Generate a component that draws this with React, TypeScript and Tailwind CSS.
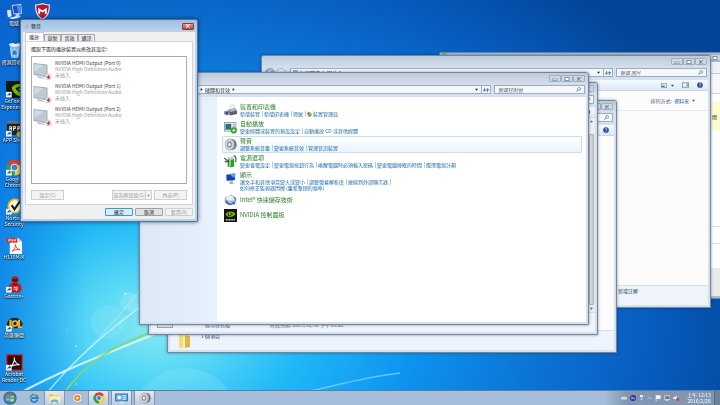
import { ReactNode } from "react";
import clsx from "clsx";

/* ---------- desktop and taskbar icons ---------- */

const ComputerIcon = () => (
  <svg viewBox="0 0 18 18" className="size-full">
    <path d="M6 2l10-1 1 10-9 1z" fill="#dfe9f4" />
    <path d="M7 3l8.400-.8.7 8L8.500 11z" fill="#1d49c9" />
    <path d="M11 2.600l4.400-.4.700 8-2.800.3z" fill="#4b86ef" />
    <path d="M10 12l4-.4.500 2.400 2 .8-6 .8-2-.8 1.800-.8z" fill="#c8d4e2" />
    <path d="M1 8l4-1 1 7-4 1z" fill="#dde6f0" />
    <path d="M3 15.500l8-1.200 3 1.200-8 1.500z" fill="#eef3f8" />
  </svg>
);

const McAfeeIcon = () => (
  <svg viewBox="0 0 18 18" className="size-full">
    <path d="M1 1.500C4 1 7 1 9 0c2 1 5 1 8 1.500 0 8-2 13-8 16.500C3 14.500 1 9.500 1 1.500z" fill="#d8dce2" />
    <path d="M2.400 2.700C5 2.400 7.500 2 9 1.400c1.500.6 4 1 6.600 1.300C15.500 9.500 14 13.500 9 16.500 4 13.500 2.500 9.500 2.400 2.700z" fill="#b3182c" />
    <path d="M4.500 11V5l4.500 3 4.500-3v6l-2 1V8.500L9 10 6.500 8.500V12z" fill="#fff" />
  </svg>
);

const RecycleIcon = () => (
  <svg viewBox="0 0 18 18" className="size-full">
    <path d="M4 4h11l-1.500 12.500c-3 1-5.500 1-8 0z" fill="#8fc3ee" opacity=".9" />
    <path d="M3 2l4-1 3 1 4-1 2 3c-4 1.500-9 1.500-12 0z" fill="#e9f3fb" />
    <path d="M5 6l1 9M9 6.500V16M13 6l-1 9" stroke="#d5eafa" strokeWidth=".8" />
    <path d="M7 12l2-3 2 3zM8 13h3" fill="#2775c9" stroke="#2775c9" />
  </svg>
);

const ShortcutMark = () => (
  <>
    <rect x="0" y="11.500" width="6" height="6" fill="#f4f8fc" />
    <path d="M1.500 16.500c0-2 .5-3 2-3.300V12l2 2-2 2v-1.200c-1 .1-1.500.7-2 1.700z" fill="#1560bd" />
  </>
);

const NvidiaEye = ({ shortcut = false }: { shortcut?: boolean }) => (
  <svg viewBox="0 0 18 18" className="size-full">
    <rect width="18" height="18" fill="#141614" />
    {shortcut ? (
      <>
        <path d="M6 7C8 4 12 2.500 18 3v13h-4C9 14 7 11 6 7z" fill="#76b900" />
        <path d="M10 8c2-2 5-2.500 8-1v5c-4 0-6-1-8-4z" fill="#141614" />
        <path d="M13 8.500c1.500-1 3.500-1 5 0v2c-2 0-4-.5-5-2z" fill="#8ed11c" />
        <ShortcutMark />
      </>
    ) : (
      <>
        <path d="M2 7C5 3 12 2 16 7c-2.500 4-8 5-11 3.500C4 10 3 8.500 2 7z" fill="#76b900" />
        <path d="M5 7c2-2.500 5-2.500 7 0-2 2.500-4 3-6 2z" fill="#141614" />
        <path d="M7 6c2-.3 3 .5 3.500 1.200C9.500 8 8.500 8.500 7 8.300z" fill="#9bdc28" />
        <path d="M2.500 15h13" stroke="#c9cdc4" strokeWidth="2" strokeDasharray="1.600 .6" />
      </>
    )}
  </svg>
);

const AppShopIcon = () => (
  <svg viewBox="0 0 18 18" className="size-full">
    <rect x="1" y="1" width="17" height="15" rx="2" fill="#202327" />
    <path d="M1 3c0-2 1-2 2-2h13c2 0 2 1 2 2v1H1z" fill="#6b7078" />
    <path d="M4 11V7h1.800v4M4 9h1.800M8 11.500V7h2v2H8M12.500 11.500V7h2v2h-2" stroke="#f1f1f1" fill="none" />
    <circle cx="14" cy="15" r="2.800" fill="#d9a62d" />
    <ShortcutMark />
  </svg>
);

const ChromeIcon = ({ shortcut = false }: { shortcut?: boolean }) => (
  <svg viewBox="0 0 18 18" className="size-full">
    <path d="M9 9L1.600 4.700A8.500 8.500 0 0 1 16.500 5z" fill="#dd3f31" />
    <path d="M9 9l7.500-4A8.500 8.500 0 0 1 9 17.500z" fill="#fbcd2f" />
    <path d="M9 9v8.500A8.500 8.500 0 0 1 1.600 4.700z" fill="#2fa04e" />
    <circle cx="9" cy="9" r="4" fill="#fff" />
    <circle cx="9" cy="9" r="3.100" fill="#3f7ee8" />
    {shortcut && <ShortcutMark />}
  </svg>
);

const NortonIcon = () => (
  <svg viewBox="0 0 18 18" className="size-full">
    <circle cx="9.500" cy="8.500" r="8" fill="#f2b91d" />
    <circle cx="9.500" cy="8.500" r="6" fill="#fdfbf2" />
    <path d="M6 7.500l3 4.500 6-9" stroke="#1b1b1b" strokeWidth="2.200" fill="none" />
    <ShortcutMark />
  </svg>
);

const PdfIcon = () => (
  <svg viewBox="0 0 18 18" className="size-full">
    <path d="M4 1h9l4 4v13H4z" fill="#fbfbfb" />
    <path d="M13 1l4 4h-4z" fill="#cfcfcf" />
    <rect x="1" y="1" width="11" height="5" fill="#cf2a20" />
    <path d="M3 5V2.300h1.500v1.500H3M6.200 2.300v2.400c2 0 2-2.400 0-2.400zM9.300 5V2.300H11M9.300 3.700h1.300" stroke="#fff" strokeWidth=".7" fill="none" />
    <path d="M6.500 15c2-1.500 4-5 3.500-7 0 3 2 5 5 5.500-3-.5-6 0-8.500 1.500z" fill="none" stroke="#d8372c" strokeWidth=".9" />
  </svg>
);

const GarenaIcon = () => (
  <svg viewBox="0 0 18 18" className="size-full">
    <circle cx="9.500" cy="4" r="3.700" fill="#b51a1c" />
    <path d="M6.500 3.500h6l-.5 2H7z" fill="#3a1210" />
    <path d="M4 9c3-2 8-2 11 0 2 3 2 7-1 8.500H5C2 16 2 12 4 9z" fill="#c41d20" />
    <path d="M7 8h5v2H7z" fill="#7c0f12" />
    <path d="M8 12h4l-1 4M8 14h4" stroke="#f6d9d2" fill="none" />
    <ShortcutMark />
  </svg>
);

const LeagueIcon = () => (
  <svg viewBox="0 0 18 18" className="size-full">
    <path d="M1 9c1-4 4-6 8-6s7 2 8.500 6l-1 5H2z" fill="#22211d" />
    <path d="M3.500 5h2.500v7h2v2H3.500zM12.500 5H15v7h2v2h-4.500z" fill="#e3b233" />
    <circle cx="9.500" cy="9" r="2.600" fill="none" stroke="#edc54d" strokeWidth="1.500" />
    <ShortcutMark />
  </svg>
);

const AcrobatIcon = () => (
  <svg viewBox="0 0 18 18" className="size-full">
    <rect x=".8" y=".8" width="16.400" height="16.400" fill="#2b0b0b" stroke="#d32b25" strokeWidth="1.400" />
    <path d="M4.500 13.500C7 12 9.500 7 8.800 3.500 8.500 7.500 11 11 14.500 11.500c-3.500-.8-7 .3-10 2z" fill="none" stroke="#f3eaea" strokeWidth="1.100" />
    <ShortcutMark />
  </svg>
);

const StartOrb = () => (
  <svg viewBox="0 0 18 18" className="size-full">
    <circle cx="9" cy="9" r="8.500" fill="#2b608f" />
    <circle cx="9" cy="9" r="7.500" fill="#3d86b8" />
    <path d="M4 5.500c1.500-1 3-1 4.500 0v3.200c-1.500-.8-3-.8-4.500 0z" fill="#ee6a35" />
    <path d="M9.500 5.800c1.500.8 3 .8 4.500-.2v3.200c-1.500 1-3 1-4.500.2z" fill="#9acb3c" />
    <path d="M4 9.700c1.500-1 3-1 4.500 0v3.200c-1.500-.8-3-.8-4.500 0z" fill="#69c3f2" />
    <path d="M9.500 10c1.500.8 3 .8 4.500-.2V13c-1.500 1-3 1-4.500.2z" fill="#fbd03b" />
  </svg>
);

const IeIcon = () => (
  <svg viewBox="0 0 18 18" className="size-full">
    <path d="M14.500 11.500A5.500 5.500 0 1 1 14.800 9H5" fill="none" stroke="#2583d3" strokeWidth="2.800" />
    <path d="M2 15.500C0 12 9 2 16 2.500c1.500.5 1 2 0 3.500" fill="none" stroke="#f0c23a" strokeWidth="1.500" />
  </svg>
);

const ExplorerIcon = () => (
  <svg viewBox="0 0 18 18" className="size-full">
    <path d="M1 3h6l1 1.500h8V15H1z" fill="#f0d577" />
    <path d="M2 6h15v9H2z" fill="#fbeeb0" />
    <path d="M4 12c2-2 8-2 10 0v4h-2v-2H6v2H4z" fill="#69b2e2" />
    <path d="M4 4h2v1H4z" fill="#54a344" />
  </svg>
);

const MediaIcon = () => (
  <svg viewBox="0 0 18 18" className="size-full">
    <rect x="8" y="2" width="8" height="13" fill="#cfe2f2" stroke="#80a6c8" />
    <circle cx="8" cy="9" r="7" fill="#f6f1ea" />
    <circle cx="8" cy="9" r="5.500" fill="#e57a1e" />
    <path d="M6.300 5.800v6.400L11.300 9z" fill="#fff" />
  </svg>
);

const PanelIcon = () => (
  <svg viewBox="0 0 18 18" className="size-full">
    <rect x="0" y="2" width="18" height="11" fill="#2e7fc0" />
    <rect x="1.500" y="3.500" width="15" height="8" fill="#6bb6e6" />
    <circle cx="6" cy="7.500" r="2.500" fill="#eaf5fb" />
    <path d="M11 5h4M11 7.500h4M11 10h4" stroke="#fff" />
    <path d="M7 13h5l1 3H6z" fill="#d7dee6" />
  </svg>
);

const SpeakerIcon = () => (
  <svg viewBox="0 0 18 18" className="size-full">
    <ellipse cx="11.500" cy="9" rx="6" ry="7.500" fill="#6f747b" />
    <ellipse cx="8" cy="9" rx="7" ry="8.300" fill="#a9aeb5" />
    <ellipse cx="7.500" cy="9" rx="5.600" ry="6.900" fill="#d6d9dd" />
    <ellipse cx="7.500" cy="9" rx="3.600" ry="4.600" fill="#9399a1" />
    <ellipse cx="7.500" cy="9" rx="1.700" ry="2.200" fill="#eef0f2" />
  </svg>
);

/* ---------- control panel icons ---------- */

const PrinterIcon = () => (
  <svg viewBox="0 0 18 18" className="size-full">
    <path d="M8 2l6-1 1 6-6 1z" fill="#f3f6f9" stroke="#a8b1bb" strokeWidth=".5" />
    <path d="M6 8l9-2 3 3v5l-9 2-3-3z" fill="#59626d" />
    <path d="M6 8l9-2 3 3-9 2z" fill="#a9b2bc" />
    <path d="M0 10l5-1 3 3v3l-5 1-3-2z" fill="#8b96a3" />
    <circle cx="4" cy="12.500" r="1.800" fill="#32475e" />
  </svg>
);

const AutoPlayIcon = () => (
  <svg viewBox="0 0 18 18" className="size-full">
    <rect x=".5" y="2" width="16" height="12" fill="#e9f0f5" stroke="#7b8b99" />
    <rect x="2" y="4" width="8" height="8" fill="#2d6f77" />
    <path d="M12 5h3M12 8h3" stroke="#6a7c8c" />
    <circle cx="13.500" cy="13" r="4.300" fill="#37a52c" />
    <path d="M11.500 13h4M13.500 11v4" stroke="#fff" strokeWidth="1.300" />
  </svg>
);

const PowerIcon = () => (
  <svg viewBox="0 0 18 18" className="size-full">
    <path d="M5 5h9v11c-3 1.500-6 1.500-9 0z" fill="#2f9a33" />
    <path d="M7 6h2.500v10H7z" fill="#8cdf7c" />
    <ellipse cx="9.500" cy="4.500" rx="4.500" ry="2" fill="#c9d0d0" />
    <path d="M0 4l5 4M1 8c3 3 5 1 6 0M13 1c4 0 4 4 3 9" stroke="#333b3d" strokeWidth="1.400" fill="none" />
  </svg>
);

const DisplayIcon = () => (
  <svg viewBox="0 0 18 18" className="size-full">
    <path d="M2 3l14-2v11L3 13z" fill="#c8d5e4" />
    <path d="M3.200 4L15 2.200v8.800l-11 1z" fill="#173fae" />
    <path d="M9 3.200l6-1v5C12 8 10 6 9 3.200z" fill="#56a6f0" />
    <path d="M8 13l4-.5.500 2.500 2 1-8 1 1.500-1.500z" fill="#9cacbf" />
  </svg>
);

const StorageIcon = () => (
  <svg viewBox="0 0 18 18" className="size-full">
    <path d="M1 5l9-4 7 4v6l-9 5-7-4z" fill="#a7b6c6" />
    <ellipse cx="9" cy="6" rx="6" ry="3.500" fill="#e8eef4" />
    <path d="M2 9c0 5 6 8 11 5l1 2 2-5-5 0 1 1.500c-3 2-7 0-8-3.500z" fill="#2f73bf" />
    <path d="M16 9c0-2-1-4-3-5" stroke="#2f73bf" strokeWidth="1.500" fill="none" />
  </svg>
);

const ShieldIcon = () => (
  <svg viewBox="0 0 10 10" className="mr-px size-[5px]">
    <path d="M5 0l4.500 1.500C9.500 6 8 8.500 5 10z" fill="#f1c232" />
    <path d="M5 0L.5 1.500C.5 6 2 8.500 5 10z" fill="#3474c4" />
    <path d="M.8 5H5v5C2.500 9 1.200 7 .8 5z" fill="#e3b52b" />
    <path d="M9.200 5H5v5c2.500-1 3.800-3 4.200-5z" fill="#3f8f3f" />
  </svg>
);

const MonitorIcon = () => (
  <svg viewBox="0 0 20 20" className="h-5 w-[21px] shrink-0">
    <path d="M1 3l14 1.500v13L1 15z" fill="#a3aeba" />
    <path d="M2 4.200l12 1.400v10.500L2 14z" fill="#bfc9d3" />
    <path d="M2 4.200l9 1L2 12z" fill="#d3dbe3" />
    <path d="M5 16l6 1.500 2 1.500-8-1z" fill="#bcc5ce" />
    <circle cx="16" cy="17" r="2.900" fill="#f5eded" stroke="#b0b0b0" strokeWidth=".5" />
    <path d="M16 15v2.600M14.500 16.800L16 18.800l1.500-2z" fill="#b83c3c" stroke="#b83c3c" strokeWidth=".8" />
  </svg>
);

const SearchGlyph = () => (
  <svg viewBox="0 0 8 8" className="size-[5px] shrink-0">
    <circle cx="5" cy="3" r="2.300" fill="#e7f2fb" stroke="#4579ad" />
    <path d="M3.200 4.800L.6 7.400" stroke="#4579ad" strokeWidth="1.400" />
  </svg>
);

const DownArrow = () => (
  <svg viewBox="0 0 4 4" className="size-[3px] shrink-0">
    <path d="M0 1h4L2 3.500z" fill="currentColor" />
  </svg>
);

const RightArrow = () => (
  <svg viewBox="0 0 4 4" className="size-[3px] shrink-0">
    <path d="M1 0v4l2.500-2z" fill="#222" />
  </svg>
);

const HelpIcon = () => (
  <svg viewBox="0 0 8 8" className="size-[6px]">
    <circle cx="4" cy="4" r="3.800" fill="#30489a" />
    <path d="M2.800 3c0-1.700 2.500-1.600 2.400 0C5.200 4 4 3.900 4 5M4 5.800v.8" stroke="#fff" strokeWidth=".8" fill="none" />
  </svg>
);

/* ---------- windows ---------- */

function WindowControls() {
  const button =
    "flex h-[7px] w-3 items-center justify-center rounded-[1px] border border-[#a0afc0] bg-[#ccd8e5] text-[#6f7c8a]";
  return (
    <div className="flex">
      <button aria-label="最小化" className={button}>
        <svg viewBox="0 0 6 4" className="h-1 w-[6px]">
          <rect x=".5" y="2" width="5" height="1.500" fill="#fff" stroke="currentColor" strokeWidth=".6" />
        </svg>
      </button>
      <button aria-label="最大化" className={button}>
        <svg viewBox="0 0 6 4" className="h-1 w-[6px]">
          <rect x="1" y=".5" width="4" height="3" fill="#fff" stroke="currentColor" strokeWidth=".8" />
        </svg>
      </button>
      <button aria-label="關閉" className={button}>
        <svg viewBox="0 0 6 4" className="h-1 w-[6px]">
          <path d="M1.300.4l3.400 3.200M4.700.4L1.300 3.600" stroke="currentColor" strokeWidth="1.100" />
        </svg>
      </button>
    </div>
  );
}

type ExplorerProps = {
  className: string;
  path: string[];
  search: string;
  children: ReactNode;
};

function ExplorerWindow({ className, path, search, children }: ExplorerProps) {
  return (
    <section
      className={clsx(
        "absolute flex h-[253px] w-[450px] flex-col rounded-t-[3px] border border-[#74879a] bg-[#d5e1ee] px-[2px] pb-[2px] shadow-[0_0_3px_rgba(0,20,50,0.45)]",
        className,
      )}
    >
      <header className="-mx-[2px] flex h-3 shrink-0 items-start justify-end rounded-t-[2px] bg-linear-to-b from-[#bccbda] to-[#d5e0eb] px-[3px] pt-[2px]">
        <WindowControls />
      </header>
      <div className="flex h-3 shrink-0 items-start gap-[3px] px-px">
        <div className="flex w-[22px] items-center gap-px">
          <button
            aria-label="上一頁"
            className="flex size-[10px] items-center justify-center rounded-full border border-[#7f93b5] bg-linear-to-b from-[#b8c9e6] to-[#3963a8] text-white"
          >
            <svg viewBox="0 0 8 8" className="size-[6px]">
              <path d="M7 4H2M4 1.500L1.500 4 4 6.500" stroke="currentColor" strokeWidth="1.500" fill="none" />
            </svg>
          </button>
          <button
            aria-label="下一頁"
            className="size-[10px] rounded-full border border-[#9fb0c4] bg-linear-to-b from-[#e9eff6] to-[#bccbdd]"
          />
        </div>
        <div className="flex h-[9px] flex-1 items-center border border-[#9dadbf] bg-[#f4f8fc]">
          <nav className="flex flex-1 items-center gap-[2px] px-[2px] text-[#333]">
            <span className="size-[5px] bg-[#8db9d4]" />
            <RightArrow />
            {path.map((part) => (
              <span key={part} className="flex items-center gap-[2px]">
                <button>{part}</button>
                <RightArrow />
              </span>
            ))}
          </nav>
          <button aria-label="先前的位置" className="px-[3px] text-[#222]">
            <DownArrow />
          </button>
          <button
            aria-label="重新整理"
            className="flex h-full w-[9px] items-center justify-center border-l border-[#9dadbf]"
          >
            <svg viewBox="0 0 8 8" className="size-[6px]">
              <path d="M.5 4h3M2 1v4M.5 4L2 6l1.500-2M4.500 4H8M6 7V3M4.500 4L6 2l1.500 2" stroke="#2b76b5" fill="none" />
            </svg>
          </button>
        </div>
        <label className="flex h-[9px] w-[91px] items-center border border-[#9dadbf] bg-[#f4f8fc] px-[3px]">
          <input
            aria-label={search}
            placeholder={search}
            className="min-w-0 flex-1 bg-transparent italic outline-none placeholder:text-[#666]"
          />
          <SearchGlyph />
        </label>
      </div>
      <div className="flex min-h-0 flex-1 flex-col">{children}</div>
    </section>
  );
}

function Toolbar({ views = false }: { views?: boolean }) {
  return (
    <div className="flex h-[11px] shrink-0 items-center justify-end gap-2 border-b border-[#cbd8e6] bg-linear-to-b from-[#f6fafe] to-[#dde8f5] px-[5px] text-[#26476f]">
      {views && (
        <>
          <button aria-label="變更檢視" className="flex items-center gap-1">
            <svg viewBox="0 0 8 6" className="h-[5px] w-[6px]">
              <rect x=".5" y=".5" width="7" height="5" fill="#e6f3fb" stroke="#6e9abb" />
              <rect x="1" y="3" width="4" height="2" fill="#4b9a55" />
            </svg>
            <DownArrow />
          </button>
          <button aria-label="預覽窗格">
            <svg viewBox="0 0 8 6" className="h-[6px] w-[7px]">
              <rect x=".5" y=".5" width="7" height="5" fill="#fff" stroke="#6e8eab" />
              <rect x="5" y="1" width="2" height="4" fill="#7fb7df" />
            </svg>
          </button>
        </>
      )}
      <button aria-label="說明">
        <HelpIcon />
      </button>
    </div>
  );
}

const categories = [
  {
    title: "裝置和印表機",
    icon: <PrinterIcon />,
    links: ["新增裝置", "新增印表機", "滑鼠", "裝置管理員"],
  },
  {
    title: "自動播放",
    icon: <AutoPlayIcon />,
    links: ["變更媒體或裝置的預設設定", "自動播放 CD 或其他媒體"],
  },
  {
    title: "聲音",
    icon: <SpeakerIcon />,
    links: ["調整系統音量", "變更系統音效", "管理音訊裝置"],
    active: true,
  },
  {
    title: "電源選項",
    icon: <PowerIcon />,
    links: [
      "變更省電設定",
      "變更電源按鈕行為",
      "喚醒電腦時必須輸入密碼",
      "變更電腦睡眠的時間",
      "選擇電源計劃",
    ],
  },
  {
    title: "顯示",
    icon: <DisplayIcon />,
    links: ["讓文字和其他項目變大或變小", "調整螢幕解析度", "連線到外部顯示器"],
    more: "如何修正監視器閃爍 (重新整理的頻率)",
  },
  { title: "Intel® 快速儲存技術", icon: <StorageIcon /> },
  { title: "NVIDIA 控制面板", icon: <NvidiaEye /> },
];

function ControlPanel() {
  return (
    <div className="flex flex-1 bg-white">
      <aside className="w-[75px] bg-linear-to-r from-[#dde8f6] to-[#e8f1fd]" />
      <ul className="flex-1 pt-[5px] pr-1 pl-[5px] text-[#1f6aa8]">
        {categories.map((item) => (
          <li
            key={item.title}
            className={clsx(
              "flex gap-[3px] rounded-[1px] border pl-px",
              item.active
                ? "border-[#c9dff0] bg-linear-to-b from-white to-[#eaf3fc]"
                : "border-transparent",
            )}
          >
            <span className={clsx("size-[13px] shrink-0", item.links && "mt-px")}>
              {item.icon}
            </span>
            <div className={item.links ? "pb-px" : "py-[2px]"}>
              <h2 className="text-[6px] leading-[8px] text-[#2a7d2a]">
                <a href="#">{item.title}</a>
              </h2>
              {item.links && (
                <ul className="flex leading-[6px] whitespace-nowrap">
                  {item.links.map((link) => (
                    <li
                      key={link}
                      className={clsx(
                        "mr-px flex items-center border-r border-[#c8c8c8] pr-[2px]",
                        !item.more && "last:border-0",
                      )}
                    >
                      {link === "裝置管理員" && <ShieldIcon />}
                      <a href="#">{link}</a>
                    </li>
                  ))}
                </ul>
              )}
              {item.more && (
                <p className="leading-[6px]">
                  <a href="#">{item.more}</a>
                </p>
              )}
            </div>
          </li>
        ))}
      </ul>
    </div>
  );
}

const devices = [0, 1, 2];
const soundTabs = ["播放", "錄製", "音效", "通訊"];

function SoundDialog() {
  const grayButton =
    "flex h-[10px] items-center justify-center border border-[#cfcfcf] bg-[#f4f4f4] text-[#9a9a9a]";
  const footButton =
    "flex h-2 w-7 items-center justify-center rounded-[1px] border";
  return (
    <section
      role="dialog"
      aria-label="聲音"
      className="absolute top-[19px] left-[20px] flex w-[178px] flex-col rounded-t-[3px] border border-[#4d7396] bg-[#b9d3ec] px-[2px] pb-[2px] shadow-[0_0_4px_rgba(0,10,40,0.6)]"
    >
      <header className="-mx-[2px] flex h-3 items-center gap-[3px] rounded-t-[2px] bg-linear-to-b from-[#a3bfdf] to-[#bcd3ea] pr-[3px] pl-[2px]">
        <span className="size-[5px] opacity-60">
          <SpeakerIcon />
        </span>
        <h1 className="flex-1 text-[#1c2733]">聲音</h1>
        <button
          aria-label="關閉"
          className="flex h-[7px] w-3 items-center justify-center rounded-[1px] border border-[#8c3b34] bg-linear-to-b from-[#dd9c90] to-[#bb4434]"
        >
          <svg viewBox="0 0 6 4" className="h-1 w-[6px]">
            <path d="M1.300.4l3.400 3.200M4.700.4L1.300 3.600" stroke="#fff" strokeWidth="1.100" />
          </svg>
        </button>
      </header>
      <div className="bg-[#f0f0f0] px-[2px] pb-[3px]">
        <div role="tablist" className="flex h-[9px] items-end text-[#222]">
          {soundTabs.map((tab, i) => (
            <button
              key={tab}
              role="tab"
              aria-selected={i === 0}
              className={clsx(
                "flex items-center border border-b-0",
                i === 0
                  ? "h-[9px] w-[19px] border-[#c4c8cc] bg-white pl-[3px]"
                  : "h-[7px] w-[17px] justify-center border-[#a5a9ad] bg-[#ececec]",
              )}
            >
              {tab}
            </button>
          ))}
        </div>
        <div className="border border-[#d0d4d8] bg-white px-[5px] pt-[3px] pb-1">
          <p className="mb-[3px] leading-[8px] text-[#222]">
            選取下面的播放裝置以修改其設定:
          </p>
          <ul className="h-32 border border-[#a6acb4] pt-[3px]">
            {devices.map((port) => (
              <li key={port} className="flex h-[23px] gap-[2px] leading-[6px] text-[#9b9b9b]">
                <MonitorIcon />
                <div>
                  <p className="text-[#444]">NVIDIA HDMI Output (Port {port})</p>
                  <p>NVIDIA High Definition Audio</p>
                  <p>未插入</p>
                </div>
              </li>
            ))}
          </ul>
          <div className="mt-[6px] flex">
            <button disabled className={clsx(grayButton, "mr-auto w-[33px]")}>
              設定(C)
            </button>
            <button disabled className={clsx(grayButton, "w-[34px]")}>
              設為預設值(S)
            </button>
            <button disabled aria-label="更多" className={clsx(grayButton, "mr-[2px] w-[6px] border-l-0")}>
              <DownArrow />
            </button>
            <button disabled className={clsx(grayButton, "w-[33px]")}>
              內容(P)
            </button>
          </div>
        </div>
        <div className="mt-[3px] flex justify-end gap-[2px]">
          <button className={clsx(footButton, "border-[#3c9ac4] bg-[#d4eef8] text-[#111]")}>
            確定
          </button>
          <button className={clsx(footButton, "border-[#a0a0a0] bg-[#e2e2e2] text-[#111]")}>
            取消
          </button>
          <button disabled className={clsx(footButton, "border-[#cfcfcf] bg-[#f4f4f4] text-[#9a9a9a]")}>
            套用(A)
          </button>
        </div>
      </div>
    </section>
  );
}

function BrowserWindow() {
  return (
    <section className="absolute top-[52px] left-[439px] flex h-[247px] w-[296px] flex-col rounded-t-[2px] border border-[#71869e] bg-[#a5bcda] pb-[2px]">
      <header className="flex h-[9px] items-center justify-between pr-px pl-[2px]">
        <span className="h-full w-[5px] bg-[#6fba83]" />
        <WindowControls />
      </header>
      <div className="h-3 border-b border-[#c2c8cf] bg-[#eef2f6]" />
      <div className="h-5 border-b border-[#d2d2d2] bg-[#f7f7f7]" />
      <div className="h-2 bg-white" />
      <div className="flex h-[29px] items-center bg-[#fdfccf] pl-[272px] text-[#333]">
        開
      </div>
      <div className="h-24 border-b border-[#e2e2e2] bg-white" />
      <div className="h-[17px] border-b border-[#e2e2e2] bg-white" />
      <div className="h-6 bg-white" />
      <div className="flex-1 bg-[#ebebeb]" />
    </section>
  );
}

/* ---------- desktop ---------- */

type Shortcut = { name: string; icon: ReactNode; hideName?: boolean };

const shortcuts: Shortcut[] = [
  { name: "電腦", icon: <ComputerIcon /> },
  { name: "資源回收筒", icon: <RecycleIcon /> },
  { name: "GeForce Experience", icon: <NvidiaEye shortcut /> },
  { name: "APP Shop", icon: <AppShopIcon /> },
  { name: "Google Chrome", icon: <ChromeIcon shortcut /> },
  { name: "Norton Security", icon: <NortonIcon /> },
  { name: "H110M-K", icon: <PdfIcon /> },
  { name: "Garena+", icon: <GarenaIcon /> },
  { name: "英雄聯盟", icon: <LeagueIcon /> },
  { name: "Acrobat Reader DC", icon: <AcrobatIcon /> },
  { name: "McAfee", icon: <McAfeeIcon />, hideName: true },
];

function Wallpaper() {
  return (
    <svg
      viewBox="0 0 720 405"
      preserveAspectRatio="xMidYMid slice"
      className="absolute inset-0 size-full"
      fill="none"
    >
      <defs>
        <radialGradient id="sky" gradientUnits="userSpaceOnUse" cx="0" cy="0" r="1" gradientTransform="translate(155 325) scale(620 450)">
          <stop offset="0" stopColor="#8be8f4" />
          <stop offset=".1" stopColor="#5ad9f6" />
          <stop offset=".24" stopColor="#20b8f7" />
          <stop offset=".42" stopColor="#0d93f0" />
          <stop offset=".6" stopColor="#0c76d6" />
          <stop offset=".8" stopColor="#075cbf" />
          <stop offset="1" stopColor="#034598" />
        </radialGradient>
        <linearGradient id="edge">
          <stop offset="0" stopColor="#0a62d6" stopOpacity=".5" />
          <stop offset=".12" stopColor="#0a62d6" stopOpacity="0" />
        </linearGradient>
        <filter id="soft">
          <feGaussianBlur stdDeviation=".7" />
        </filter>
      </defs>
      <rect width="720" height="405" fill="url(#sky)" />
      <rect width="720" height="405" fill="url(#edge)" />
      <circle cx="185" cy="422" r="54" fill="#b8f2fb" opacity=".18" />
      <circle cx="130" cy="302" r="10" fill="#d4f8fb" opacity=".2" />
      <circle cx="108" cy="322" r="17" fill="#c4f5fb" opacity=".13" />
      <g filter="url(#soft)">
        <path d="M20 393C60 371 105 354 170 328" stroke="#e2fbff" strokeWidth="2.200" opacity=".8" />
        <path d="M47 393C70 365 100 335 150 300" stroke="#d8faff" strokeWidth="1.200" opacity=".8" />
        <path d="M62 374C90 348 115 322 145 284" stroke="#d8faff" strokeWidth=".8" opacity=".6" />
        <path d="M64 393C85 364 112 344 165 328" stroke="#84d86c" strokeWidth="1.800" />
        <path d="M300 393C335 386 360 378 400 373" stroke="#7fd8fb" strokeWidth="1.500" opacity=".7" />
      </g>
      <g fill="#e8fdff" opacity=".8">
        <circle cx="125" cy="294" r="1" />
        <circle cx="76" cy="346" r=".8" />
        <circle cx="104" cy="312" r=".6" />
        <circle cx="67" cy="330" r=".5" />
        <circle cx="115" cy="352" r=".6" />
        <circle cx="76" cy="384" r=".8" />
      </g>
    </svg>
  );
}

function Taskbar() {
  const task = "flex h-full w-[21px] items-center justify-center";
  const open = "border-x border-[#8396ae] bg-linear-to-b from-[#e2eaf3] to-[#bccddf]";
  return (
    <footer className="relative flex h-[15px] items-center border-t border-[#5f7d9c] bg-linear-to-r from-[#a6bedb] from-84% to-[#8096b2] to-87%">
      <button aria-label="開始" className="ml-[3px] size-[14px]">
        <StartOrb />
      </button>
      <button aria-label="Internet Explorer" className={clsx(task, "ml-[6px]")}>
        <span className="size-3"><IeIcon /></span>
      </button>
      <button aria-label="檔案總管" className={clsx(task, open)}>
        <span className="size-[13px]"><ExplorerIcon /></span>
      </button>
      <button aria-label="Media Player" className={clsx(task, "ml-[2px] w-6")}>
        <span className="size-[10px]"><MediaIcon /></span>
      </button>
      <button aria-label="Chrome" className={clsx(task, open)}>
        <span className="size-3"><ChromeIcon /></span>
      </button>
      <button aria-label="控制台" className={clsx(task, open, "ml-[2px]")}>
        <span className="size-[13px]"><PanelIcon /></span>
      </button>
      <button aria-label="聲音" className={clsx(task, open, "ml-[2px]")}>
        <span className="size-3"><SpeakerIcon /></span>
      </button>
      <div className="ml-auto flex items-center gap-[3px]">
        <svg viewBox="0 0 8 8" className="size-[6px]">
          <rect y="2" width="8" height="4.500" fill="#d9d9d4" stroke="#7d8a97" strokeWidth=".5" />
        </svg>
        <svg viewBox="0 0 8 8" className="size-[6px]">
          <circle cx="4" cy="4" r="4" fill="#1c2f9e" />
          <path d="M2.500 2v4M2.500 4h2M5 3l1 3" stroke="#fff" strokeWidth=".9" fill="none" />
        </svg>
        <svg viewBox="0 0 6 8" className="h-[6px] w-[5px]">
          <path d="M1 0h4v3H1zM1.500 5h3L3 7.500z" fill="#e6edf4" />
        </svg>
        <svg viewBox="0 0 6 8" className="h-[6px] w-[5px]">
          <path d="M1 5l2-2 2 2" stroke="#e6edf4" fill="none" />
        </svg>
        <svg viewBox="0 0 8 8" className="size-[6px]">
          <path d="M1.500 0v8M2 1h5v3.500H2z" fill="#fff" stroke="#fff" />
        </svg>
        <svg viewBox="0 0 8 8" className="size-[6px]">
          <path d="M1 1h7v5H1z" fill="#67798c" stroke="#e9eef3" />
          <path d="M2 7.500h4" stroke="#e9eef3" />
        </svg>
        <svg viewBox="0 0 8 8" className="size-[6px]">
          <path d="M0 3h2l3-2.500v7L2 5H0z" fill="#eef2f6" />
          <circle cx="6" cy="6" r="2" fill="#d3342c" />
        </svg>
      </div>
      <time className="ml-2 w-6 text-center leading-[6px] text-white">
        上午 12:13
        <br />
        2016/2/28
      </time>
      <button
        aria-label="顯示桌面"
        className="ml-[3px] h-full w-[6px] border-l border-[#50677f] bg-[#6c8199]"
      />
    </footer>
  );
}

export default function App() {
  return (
    <div className="relative flex h-screen flex-col overflow-hidden bg-[#0a6cd0] font-['Noto_Sans_CJK_TC',sans-serif] text-[5px] leading-[6px]">
      <Wallpaper />
      <main className="relative min-h-0 flex-1">
        <ul className="grid w-14 grid-flow-col grid-cols-2 grid-rows-[repeat(10,39px)] text-center text-white">
          {shortcuts.map((item) => (
            <li key={item.name}>
              <a
                href="#"
                aria-label={item.name}
                className="flex flex-col items-center pt-[3px] [text-shadow:0_0_2px_#000,0_1px_1px_#000]"
              >
                <span className="size-[17px] shrink-0">{item.icon}</span>
                {!item.hideName && <span className="w-7">{item.name}</span>}
              </a>
            </li>
          ))}
        </ul>

        <BrowserWindow />

        <ExplorerWindow className="top-[55px] left-[261px]" path={["媒體櫃", "圖片"]} search="搜尋 圖片">
          <Toolbar views />
          <div className="flex-1 bg-[#fcfcfd]">
            <div className="flex h-5 items-center justify-end gap-[2px] border-b border-[#e3eaf2] pr-[13px] text-[#5a6570]">
              <label htmlFor="arrange">排列方式:</label>
              <span className="flex items-center gap-[2px] text-[#1f5f9f]">
                <select id="arrange" className="appearance-none bg-transparent">
                  <option>資料夾</option>
                </select>
                <DownArrow />
              </span>
            </div>
          </div>
          <div className="h-5 border-t border-[#d3dfec] bg-[#eff3fb] pt-[2px] pr-[70px] text-right text-[#33506f]">
            新增註解
          </div>
        </ExplorerWindow>

        <ExplorerWindow className="top-[100px] left-[167px]" path={["電腦"]} search="搜尋 電腦">
          <Toolbar />
          <div className="flex-1 bg-[#fcfcfd]" />
          <div className="flex h-5 gap-[9px] border-t border-[#d3dfec] bg-[#eff3fb] pt-[2px] pl-2 text-[#33506f]">
            <svg viewBox="0 0 14 16" className="h-4 w-[14px]">
              <path d="M1 2l6-2v14l-6 1z" fill="#f4da7c" />
              <path d="M6 2l6 1v11l-6 1z" fill="#dfb642" />
              <path d="M5 1l2-1v15H5z" fill="#fdf2b8" />
            </svg>
            1 個項目
          </div>
        </ExplorerWindow>

        <ExplorerWindow className="top-[82px] left-[148px]" path={["下載"]} search="搜尋 下載">
          <Toolbar />
          <div className="flex min-h-0 flex-1 bg-[#fcfcfd]">
            <div className="ml-auto flex w-[7px] flex-col items-center justify-between bg-[#eeeeee] py-[2px] text-[#555]">
              <span className="rotate-180">
                <DownArrow />
              </span>
              <span className="mt-[11px] mb-[2px] w-[5px] flex-1 rounded-[1px] border border-[#b0b0b0] bg-linear-to-r from-[#e6e6e6] to-[#c6c6c6]" />
              <DownArrow />
            </div>
          </div>
          <div className="flex h-5 items-end border-t border-[#d3dfec] bg-[#eff3fb] pb-[4px] pl-[6px] text-[#5c6f84]">
            <span className="h-[14px] w-4 border border-[#9aa5b0] bg-[#dfe5eb]" />
            <span className="ml-8">應用程式檔</span>
            <span className="ml-10">修改日期: 2013/12/30 下午 05:20</span>
          </div>
        </ExplorerWindow>

        <ExplorerWindow className="top-[72px] left-[139px]" path={["控制台", "硬體和音效"]} search="搜尋控制台">
          <ControlPanel />
        </ExplorerWindow>

        <SoundDialog />
      </main>
      <Taskbar />
    </div>
  );
}
